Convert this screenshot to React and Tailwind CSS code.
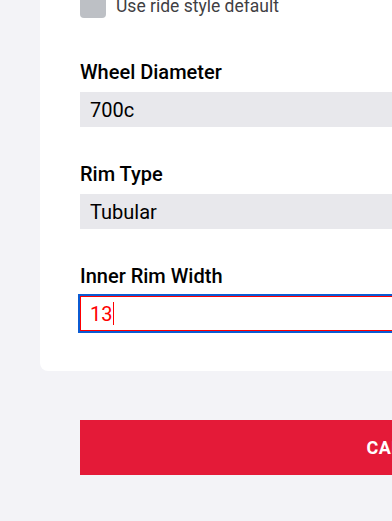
const Field = ({ label, children }) => (
    <div className="flex flex-col">
        <label className="text-[20px] leading-[24px] font-medium text-black mb-2">{label}</label>
        {children}
    </div>
);

const App = () => {
    return (
        <div className="w-[392px] h-[521px] overflow-hidden bg-[#f3f3f7]" style={{ fontFamily: 'Roboto, "Liberation Sans", sans-serif' }}>
            <div className="w-[836px] -mt-[8px]">
                <div className="mx-10 bg-white rounded-b-lg px-10 pb-10">
                    <div className="flex items-center gap-[10px]">
                        <div className="w-[26px] h-[26px] rounded-[4px] bg-[#bdc0c5]" />
                        <span className="text-[17.5px] leading-[22px] text-[#3f3f44] mt-[2px]">Use ride style default</span>
                    </div>

                    <div className="flex flex-col gap-[35px] mt-[42px]">
                        <Field label="Wheel Diameter">
                            <div className="h-[35px] bg-[#e8e8ec] px-[10px] flex items-center text-[20px] text-black">700c</div>
                        </Field>
                        <Field label="Rim Type">
                            <div className="h-[35px] bg-[#e8e8ec] px-[10px] flex items-center text-[20px] text-black">Tubular</div>
                        </Field>
                        <Field label="Inner Rim Width">
                            {/* focused input, drawn with its caret */}
                            <div className="h-[35px] bg-white border border-[#ff0000] outline-2 outline-[#0b5bd3] px-[9px] flex items-center text-[20px] text-[#ff0000]">
                                13
                                <span className="w-px h-[23px] bg-[#ff0000] ml-px" />
                            </div>
                        </Field>
                    </div>
                </div>

                <button className="mx-20 mt-[49px] w-[676px] h-[55px] bg-[#e41a38] text-white font-bold text-[18px] tracking-wide">
                    CALCULATE
                </button>
            </div>
        </div>
    );
};

export default App;
